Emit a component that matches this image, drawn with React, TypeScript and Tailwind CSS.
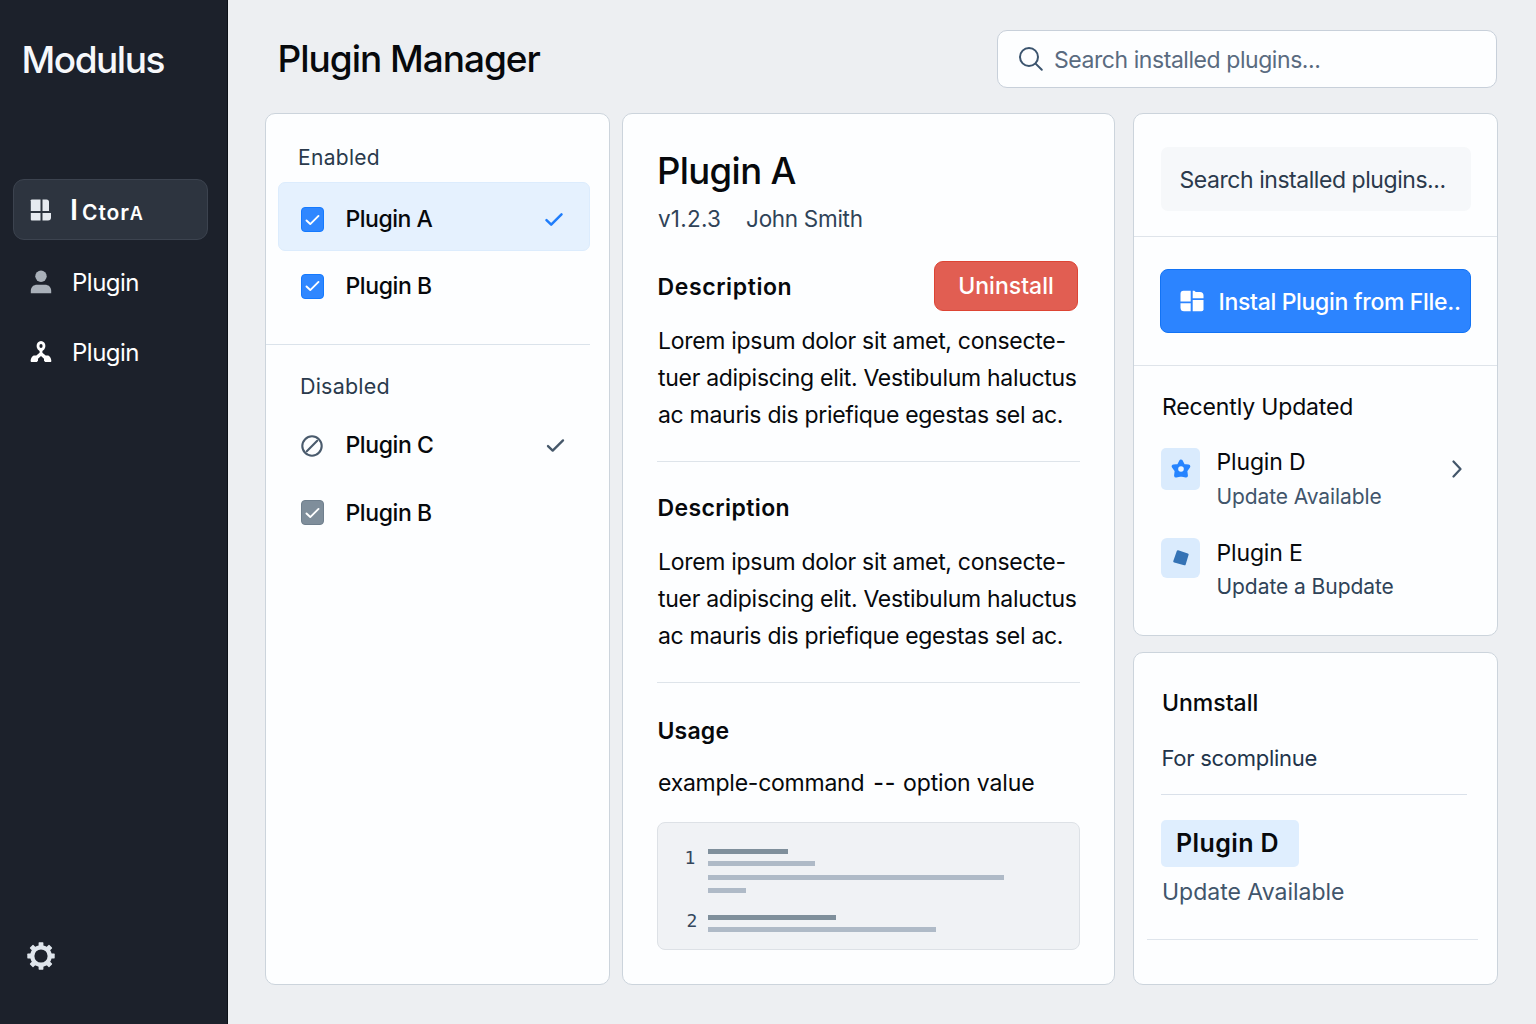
import React from 'react';

function CheckMark({ className, width = 2 }: { className: string; width?: number }) {
  return (
    <svg viewBox="0 0 20 16" className={className} fill="none" stroke="currentColor" strokeWidth={width} strokeLinecap="round" strokeLinejoin="round">
      <path d="M2 8.6 7 13.4 18 2.6" />
    </svg>
  );
}

function CheckBox({ muted = false }: { muted?: boolean }) {
  return (
    <span
      className={
        'flex h-[25px] w-[23px] items-center justify-center rounded-[4px] border ' +
        (muted ? 'border-[#6f7f8d] bg-[#7f8e9b]' : 'border-[#147aff] bg-[#2f87ff]')
      }
    >
      <CheckMark className="h-[12px] w-[15px] text-white" width={2.5} />
    </span>
  );
}

function GridIcon() {
  return (
    <svg viewBox="0 0 22 22" className="h-[22px] w-[22px]" fill="#e6eaf0">
      <path d="M1.500.500H10.500V12H.800V1.200Z" />
      <path d="M12.500.500h4a2.500 2.500 0 0 1 2.500 2.500v9h-6.500Z" />
      <path d="M.800 14H10.500V21.500H1.800a1 1 0 0 1-1-1Z" />
      <path d="M12.500 14h8.500V18.500a3 3 0 0 1-3 3h-5.500Z" />
    </svg>
  );
}

function UserIcon() {
  return (
    <svg viewBox="0 0 22 24" className="h-[24px] w-[22px]" fill="#a9b0b9">
      <circle cx="11" cy="6.200" r="5.700" />
      <path d="M.8 23.300v-2.500c0-4 3-6.100 6.200-6.100h8c3.200 0 6.200 2.100 6.200 6.100v2.500Z" />
    </svg>
  );
}

function BranchIcon() {
  return (
    <svg viewBox="0 0 22 22" className="h-[22px] w-[22px]">
      <ellipse cx="11" cy="5" rx="3" ry="3.500" fill="none" stroke="#fff" strokeWidth="2.800" />
      <path d="M9.600 8.500h2.800v3.300l3.300 2.700h1.800c2.200 0 3.700 2.600 3.900 5.700l-.6.800h-5.600l-1.200-1.200v-2.100L11 15l-3 2.700v2.100L6.800 21H1.200l-.6-.8c.2-3.100 1.700-5.700 3.900-5.700h1.800l3.300-2.700Z" fill="#fff" />
    </svg>
  );
}

function GearIcon() {
  const teeth = [0, 45, 90, 135, 180, 225, 270, 315];
  return (
    <svg viewBox="-14 -14 28 28" className="h-[28px] w-[28px]">
      <circle r="8.700" fill="none" stroke="#dfe5ec" strokeWidth="4.200" />
      {teeth.map((a) => (
        <rect key={a} x="-2.400" y="-13.700" width="4.800" height="4.500" rx=".6" fill="#dfe5ec" transform={`rotate(${a})`} />
      ))}
    </svg>
  );
}

function InstallIcon() {
  return (
    <svg viewBox="0 0 24 22" className="h-[22px] w-[24px]" fill="#fff">
      <path d="M3.500.8h7.200v10.700H.5V3.800a3 3 0 0 1 3-3Z" />
      <path d="M12.700.8h1.600l1.500 1.200H20a3.500 3.500 0 0 1 3.500 3.500v2.800H12.700Z" />
      <path d="M.5 13.300h10.200v8H4A3.500 3.500 0 0 1 .5 17.800Z" />
      <path d="M12.700 10h10.800v9.300a2 2 0 0 1-2 2h-8.800Z" />
    </svg>
  );
}

function FlowerIcon() {
  return (
    <svg viewBox="-10 -10 20 20" className="h-[20px] w-[20px]">
      <path
        d="M0-7.500 2.300-3.200 7.400-2.700 4.400 1.600 5 6.600 0 5.700-5 6.600-4.400 1.600-7.400-2.700-2.300-3.200Z"
        fill="#2684ff"
        stroke="#2684ff"
        strokeWidth="3.800"
        strokeLinejoin="round"
      />
      <circle r="2.800" fill="#e8f3ff" />
    </svg>
  );
}

const descriptionLines = ['Lorem ipsum dolor sit amet, consecte-', 'tuer adipiscing elit. Vestibulum haluctus', 'ac mauris dis priefique egestas sel ac.'];

function Paragraph() {
  return (
    <p className="ml-px text-[23px] leading-[36.8px] tracking-[-0.3px]">
      {descriptionLines.map((line) => (
        <span key={line} className="block">
          {line}
        </span>
      ))}
    </p>
  );
}

const code = [
  { w: 'w-[80px]', gap: '', dark: true },
  { w: 'w-[107px]', gap: 'mt-[7px]', dark: false },
  { w: 'w-[296px]', gap: 'mt-[9px]', dark: false },
  { w: 'w-[38px]', gap: 'mt-[8px]', dark: false },
  { w: 'w-[128px]', gap: 'mt-[22px]', dark: true },
  { w: 'w-[228px]', gap: 'mt-[7px]', dark: false },
];

const card = 'rounded-[10px] border border-[#ccd4dc] bg-[#fdfeff]';

export default function App() {
  return (
    <div className="flex h-[1024px] w-[1536px] overflow-hidden bg-[#edeff2] font-['Inter',sans-serif] whitespace-nowrap text-[#07090c]">
      <aside className="flex w-[228px] shrink-0 flex-col border-r border-[#0c1118] bg-[#1c212b] text-white">
        <div className="flex h-[120px] items-center pl-[21.5px] text-[37px] font-medium tracking-[-1.47px] text-[#f6f8fb]">Modulus</div>
        <nav className="mt-[59px]">
          <div className="ml-[13px] flex h-[61px] w-[195px] items-center rounded-[11px] border border-[#3c434f] bg-[#2d343f] pl-[16px]">
            <GridIcon />
            <span className="ml-[18px] flex items-baseline leading-none">
              <span className="text-[29px] font-semibold">I</span>
              <span className="ml-[4px] text-[21px] font-semibold tracking-[0.9px]">
                Cto<span className="text-[22px]">r</span>
                <span className="text-[18px]">A</span>
              </span>
            </span>
          </div>
          <div className="mt-[7px] flex h-[70px] items-center pl-[30px]">
            <UserIcon />
            <span className="mt-px ml-[20px] text-[24px] tracking-[-0.5px]">Plugin</span>
          </div>
          <div className="flex h-[70px] items-center pl-[30px]">
            <BranchIcon />
            <span className="mt-px ml-[20px] text-[24px] tracking-[-0.5px]">Plugin</span>
          </div>
        </nav>
        <div className="mt-auto mb-[54px] ml-[27px]">
          <GearIcon />
        </div>
      </aside>

      <main className="flex w-[1308px] flex-col pl-[37px]">
        <header className="flex h-[113px] shrink-0 items-start justify-between pr-[39px] pl-[12.5px]">
          <h1 className="flex h-[118px] items-center text-[37px] font-medium tracking-[-1.03px]">Plugin Manager</h1>
          <div className="mt-[30px] flex h-[58px] w-[500px] items-center rounded-[10px] border border-[#c8d0da] bg-[#fdfeff] pl-[20px]">
            <svg viewBox="0 0 26 26" className="h-[26px] w-[26px] text-[#3b546e]" fill="none" stroke="currentColor" strokeWidth="2" strokeLinecap="round">
              <circle cx="11" cy="11" r="9" />
              <path d="m17.600 17.600 6.200 6.200" />
            </svg>
            <span className="mt-[2px] ml-[10px] text-[23px] tracking-[-0.44px] text-[#5a6b80]">Search installed plugins...</span>
          </div>
        </header>

        <div className="flex h-[872px]">
          <section className={`${card} w-[345px]`}>
            <div className="mt-[28px] ml-[32px] flex h-[32px] items-center text-[21px] tracking-[0.3px] text-[#2a3a4c]">Enabled</div>
            <div className="mt-[8px] ml-[12px] flex h-[69px] w-[312px] items-center rounded-[7px] border border-[#dcecfd] bg-[#e5f1fe] pt-[6px] pl-[22px]">
              <CheckBox />
              <span className="ml-[21.5px] flex-1 text-[23px] font-medium tracking-[-0.49px]">Plugin A</span>
              <CheckMark className="mr-[25px] h-[15px] w-[20px] text-[#1f7dfb]" width={2.7} />
            </div>
            <div className="ml-[35px] flex h-[70px] items-center">
              <CheckBox />
              <span className="ml-[21.5px] text-[23px] font-medium tracking-[-0.4px]">Plugin B</span>
            </div>
            <div className="mt-[23px] h-px w-[324px] bg-[#dbe3eb]" />
            <div className="mt-[25px] ml-[34px] flex h-[32px] items-center text-[21.5px] tracking-[0.2px] text-[#2a3a4c]">Disabled</div>
            <div className="mt-[10px] ml-[35px] flex h-[67px] items-center">
              <svg viewBox="0 0 22 22" className="h-[22px] w-[22px]" fill="none" stroke="#4a5b6d" strokeWidth="2.100" strokeLinecap="round">
                <circle cx="11" cy="11" r="9.700" />
                <path d="M5.800 16.200 16.200 5.800" />
              </svg>
              <span className="ml-[22.5px] flex-1 text-[23px] font-medium tracking-[-0.4px]">Plugin C</span>
              <CheckMark className="mr-[44px] h-[15px] w-[19px] text-[#46586a]" width={2.5} />
            </div>
            <div className="ml-[35px] flex h-[67px] items-center">
              <CheckBox muted />
              <span className="mt-px ml-[21.5px] text-[23px] font-medium tracking-[-0.4px]">Plugin B</span>
            </div>
          </section>

          <section className={`${card} ml-[12px] w-[493px] pr-[34px] pl-[34px]`}>
            <h2 className="mt-[32px] flex h-[50px] items-center text-[36.5px] font-medium tracking-[-0.65px]">Plugin A</h2>
            <div className="mt-[7px] ml-px flex h-[32px] items-center gap-[25px] text-[22.5px] text-[#2f4358]">
              <span className="tracking-[0.22px]">v1.2.3</span>
              <span className="tracking-[-0.3px]">John Smith</span>
            </div>
            <div className="mt-[26px] flex h-[50px] items-center justify-between">
              <h3 className="mt-[2px] ml-[0.5px] text-[23px] font-semibold tracking-[0.6px]">Description</h3>
              <button className="mr-[2px] h-[50px] w-[144px] rounded-[9px] border border-[#dd4434] bg-[#e15e52] text-[23px] font-medium text-white">Uninstall</button>
            </div>
            <div className="mt-[12px]">
              <Paragraph />
            </div>
            <div className="mt-[28px] h-px w-[423px] bg-[#dee4ea]" />
            <h3 className="mt-[28px] ml-[0.5px] flex h-[36px] items-center text-[23px] font-semibold tracking-[0.4px]">Description</h3>
            <div className="mt-[18px]">
              <Paragraph />
            </div>
            <div className="mt-[27px] h-px w-[423px] bg-[#dee4ea]" />
            <h3 className="mt-[30px] ml-[0.5px] flex h-[36px] items-center text-[23px] font-semibold tracking-[0.2px]">Usage</h3>
            <div className="mt-[17px] ml-px flex h-[34px] items-center text-[23px] tracking-[-0.25px]">
              <span>example-command</span>
              <span className="ml-[9px] font-medium tracking-[0.8px]">--</span>
              <span className="ml-[7px] tracking-[-0.15px]">option value</span>
            </div>
            <div className="mt-[22px] flex h-[128px] w-[423px] rounded-[8px] border border-[#dde1e6] bg-[#f0f2f5]">
              <div className="w-[50px] pl-[26.5px] font-['DejaVu_Sans_Mono',monospace] text-[18px] leading-none text-[#34475c]">
                <div className="mt-[26px] h-[20px]">1</div>
                <div className="mt-[43px] ml-[2px] h-[20px]">2</div>
              </div>
              <div className="pt-[26px]">
                {code.map((c, i) => (
                  <div key={i} className={`h-[5px] ${c.w} ${c.gap} ${c.dark ? 'bg-[#7f8f9b]' : 'bg-[#afbac7]'}`} />
                ))}
              </div>
            </div>
          </section>

          <div className="ml-[18px] flex w-[365px] flex-col gap-[16px]">
            <section className={`${card} h-[523px]`}>
              <div className="mt-[33px] ml-[27px] flex h-[64px] w-[310px] items-center rounded-[7px] bg-[#f6f8fa] pt-[2px] pl-[18.5px] text-[23px] tracking-[-0.45px] text-[#2b3a4c]">
                Search installed plugins...
              </div>
              <div className="mt-[25px] h-px bg-[#dfe4ea]" />
              <button className="mt-[32px] ml-[26px] flex h-[64px] w-[311px] items-center rounded-[8px] border border-[#1273f5] bg-[#2c84ff] pl-[19px] text-white">
                <InstallIcon />
                <span className="mt-[2px] ml-[14.5px] text-[23px] font-medium tracking-[-0.32px]">Instal Plugin from Flle..</span>
              </button>
              <div className="mt-[32px] h-px bg-[#dfe4ea]" />
              <h3 className="mt-[25px] ml-[28px] flex h-[32px] items-center text-[23px] tracking-[-0.15px]">Recently Updated</h3>
              <div className="mt-[22px] ml-[27px] flex h-[69px]">
                <span className="mt-[3px] flex h-[42px] w-[39px] items-center justify-center rounded-[5px] bg-[#daebfd]">
                  <FlowerIcon />
                </span>
                <div className="ml-[16.500px] flex-1">
                  <div className="flex h-[34px] items-center text-[23px] tracking-[-0.15px]">Plugin D</div>
                  <div className="mt-[2px] flex h-[32px] items-center text-[21px] tracking-[-0.1px] text-[#41556b]">Update Available</div>
                </div>
                <svg viewBox="0 0 10 18" className="mt-[15px] mr-[35px] h-[18px] w-[10px]" fill="none" stroke="#43566a" strokeWidth="2.200" strokeLinecap="round" strokeLinejoin="round">
                  <path d="m1.500 1.500 7 7.500-7 7.500" />
                </svg>
              </div>
              <div className="mt-[22px] ml-[27px] flex h-[69px]">
                <span className="mt-[2px] flex h-[40px] w-[39px] items-center justify-center rounded-[6px] bg-[#daebfd]">
                  <svg viewBox="0 0 18 18" className="h-[18px] w-[18px]">
                    <path d="m6.200 1.300 9.600 3.100c.7.200 1 .8.800 1.400l-2.900 9.600c-.2.800-.8 1.100-1.500.9l-10-2.800c-.7-.2-1.100-.8-.9-1.500l3.500-9.900c.2-.7.700-1 1.400-.8Z" fill="#3573b5" />
                  </svg>
                </span>
                <div className="ml-[16.500px]">
                  <div className="flex h-[34px] items-center text-[23px] tracking-[-0.15px]">Plugin E</div>
                  <div className="mt-[1px] flex h-[32px] items-center text-[21px] tracking-[-0.06px] text-[#2f4358]">Update a Bupdate</div>
                </div>
              </div>
            </section>

            <section className={`${card} h-[333px]`}>
              <h3 className="mt-[33px] ml-[28px] flex h-[34px] items-center text-[23px] font-medium">Unmstall</h3>
              <p className="mt-[22px] ml-[27.5px] flex h-[32px] items-center text-[22px] tracking-[-0.27px] text-[#22344a]">For scomplinue</p>
              <div className="mt-[20px] ml-[27px] h-px w-[306px] bg-[#dae1ea]" />
              <div className="mt-[25px] ml-[27px] flex h-[47px] w-[138px] items-center rounded-[5px] bg-[#dfeefe] pl-[15px] text-[25px] font-semibold tracking-[0.4px]">Plugin D</div>
              <p className="mt-[8px] ml-[28px] flex h-[34px] items-center text-[23px] tracking-[0px] text-[#41556b]">Update Available</p>
              <div className="mt-[30px] ml-[13px] h-px w-[331px] bg-[#dfe5ec]" />
            </section>
          </div>
        </div>
      </main>
    </div>
  );
}
